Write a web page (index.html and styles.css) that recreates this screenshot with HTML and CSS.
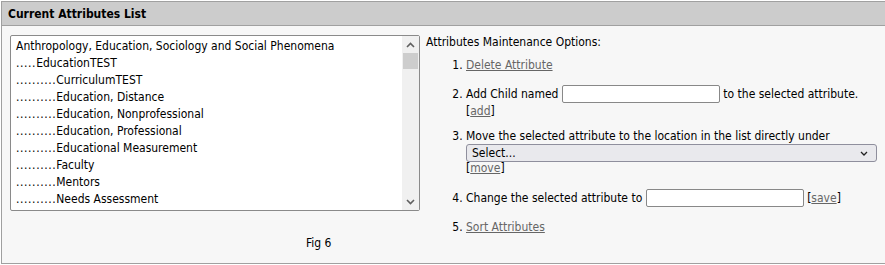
FILE: index.html
```html
<!DOCTYPE html>
<html lang="en">
<head>
    <meta charset="UTF-8">
    <title>Current Attributes List</title>
    <link rel="stylesheet" href="styles.css">
</head>
<body>
    <div class="panel">
        <div class="panel-head">Current Attributes List</div>
        <div class="panel-body">
            <div class="list-col">
                <div class="listbox">
                    <div class="list-items">
                        <div class="item">Anthropology, Education, Sociology and Social Phenomena</div>
                        <div class="item"><span class="dots">.....</span>EducationTEST</div>
                        <div class="item"><span class="dots">..........</span>CurriculumTEST</div>
                        <div class="item"><span class="dots">..........</span>Education, Distance</div>
                        <div class="item"><span class="dots">..........</span>Education, Nonprofessional</div>
                        <div class="item"><span class="dots">..........</span>Education, Professional</div>
                        <div class="item"><span class="dots">..........</span>Educational Measurement</div>
                        <div class="item"><span class="dots">..........</span>Faculty</div>
                        <div class="item"><span class="dots">..........</span>Mentors</div>
                        <div class="item"><span class="dots">..........</span>Needs Assessment</div>
                    </div>
                    <div class="scrollbar">
                        <div class="arrow">
                            <svg width="9" height="6" viewBox="0 0 9 6"><path d="M1 5 L4.5 1.5 L8 5" fill="none" stroke="#606060" stroke-width="1.6"/></svg>
                        </div>
                        <div class="thumb"></div>
                        <div class="track"></div>
                        <div class="arrow">
                            <svg width="9" height="6" viewBox="0 0 9 6"><path d="M1 1 L4.5 4.5 L8 1" fill="none" stroke="#606060" stroke-width="1.6"/></svg>
                        </div>
                    </div>
                </div>
                <div class="caption">Fig 6</div>
            </div>
            <div class="options">
                <div class="options-title">Attributes Maintenance Options:</div>
                <ol class="option-list">
                    <li class="opt-delete"><a href="#">Delete Attribute</a></li>
                    <li class="opt-add">
                        Add Child named <input type="text" class="field"> to the selected attribute.
                        <div class="action">[<a href="#">add</a>]</div>
                    </li>
                    <li class="opt-move">
                        Move the selected attribute to the location in the list directly under
                        <div class="select">
                            <span>Select...</span>
                            <svg width="8" height="5" viewBox="0 0 8 5"><path d="M1 1 L4 4 L7 1" fill="none" stroke="#222" stroke-width="1.3"/></svg>
                        </div>
                        <div class="action">[<a href="#">move</a>]</div>
                    </li>
                    <li class="opt-change">Change the selected attribute to <input type="text" class="field"> [<a href="#">save</a>]</li>
                    <li><a href="#">Sort Attributes</a></li>
                </ol>
            </div>
        </div>
    </div>
</body>
</html>
```

FILE: styles.css
```css
body {
    margin: 0;
    font-family: "DejaVu Sans Condensed", "DejaVu Sans", sans-serif;
    font-size: 12px;
    color: #000;
    background: #fff;
}
.panel {
    margin: 1px 0 0 1px;
    width: 900px;
    height: 261px;
    border: 1px solid #a0a0a0;
    border-right: none;
    background: #f7f7f7;
}
.panel-head {
    height: 23px;
    line-height: 24px;
    padding-left: 6px;
    background: #cccccc;
    border-bottom: 1px solid #a0a0a0;
    font-weight: bold;
}
.panel-body {
    display: flex;
    padding: 9px 0 0 8px;
}
.list-col {
    width: 410px;
}
.listbox {
    display: flex;
    height: 174px;
    border: 1px solid #8a8a8a;
    border-radius: 2px;
    background: #fff;
}
.list-items {
    flex: 1;
    padding: 2px 0 0 5px;
}
.item {
    height: 17px;
    line-height: 17px;
    white-space: nowrap;
}
.dots {
    letter-spacing: 0.6px;
}
.scrollbar {
    width: 17px;
    display: flex;
    flex-direction: column;
    background: #f0f0f0;
}
.arrow {
    height: 17px;
    display: flex;
    align-items: center;
    justify-content: center;
}
.thumb {
    height: 16px;
    margin: 0 1px;
    background: #cdcdcd;
}
.track {
    flex: 1;
}
.caption {
    margin: 25px 0 0 296px;
}
.options {
    padding: 0 0 0 6px;
    flex: 1;
}
.options-title {
    line-height: 15px;
}
.option-list {
    margin: 8px 0 0;
    padding-left: 40px;
}
.option-list li {
    margin-bottom: 12px;
    line-height: 15px;
}
.option-list .opt-add {
    margin-bottom: 10px;
}
.option-list .opt-move {
    margin-bottom: 13px;
}
.option-list .opt-change {
    margin-bottom: 13px;
}
.option-list a {
    color: #666;
}
.action {
    margin-top: 1px;
}
.opt-move .action {
    margin-top: -1px;
}
.field {
    width: 152px;
    height: 14px;
    margin: 0;
    padding: 1px 2px;
    border: 1px solid #888;
    border-radius: 2px;
    background: #fff;
    vertical-align: middle;
}
.select {
    display: flex;
    align-items: center;
    justify-content: space-between;
    width: 396px;
    height: 16px;
    padding: 0 8px 0 5px;
    border: 1px solid #8f8f9d;
    border-radius: 3px;
    background: #e9e9ed;
}
```
